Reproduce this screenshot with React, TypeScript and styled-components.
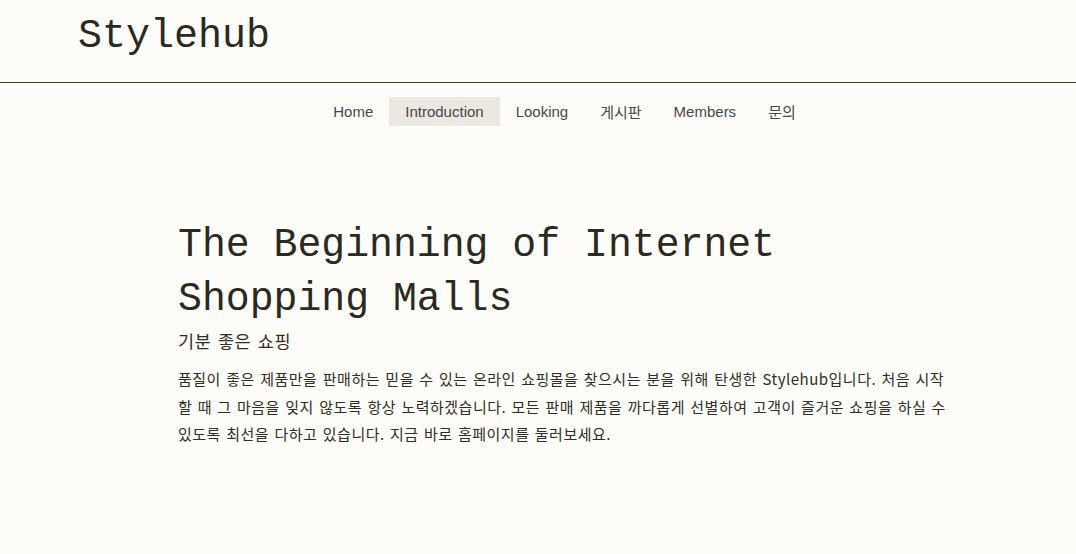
import React from "react";
import styled, { createGlobalStyle } from "styled-components";

const Global = createGlobalStyle`
  html, body { margin: 0; padding: 0; background: #fdfcf8; }
  body { font-family: "Liberation Sans", "Noto Sans CJK KR", sans-serif; color: #2e2e26; }
`;

const Header = styled.header`
  height: 82px;
  border-bottom: 1px solid #3f4231;
  display: flex;
  align-items: center;
  padding-left: 78px;
  box-sizing: content-box;
`;

const Logo = styled.div`
  font-family: "Liberation Mono", "Courier New", monospace;
  font-size: 40px;
  color: #2a2a22;
  margin-top: -10px;
`;

const Nav = styled.nav`
  display: flex;
  justify-content: center;
  margin-top: 14px;
  padding-left: 53px;
`;

const NavItem = styled.a<{ $active?: boolean }>`
  display: flex;
  align-items: center;
  height: 29px;
  padding: 0 16px;
  font-size: 15px;
  color: #4a4548;
  background: ${(p) => (p.$active ? "#ece8e1" : "transparent")};
  font-family: "Liberation Sans", "Noto Sans CJK KR", sans-serif;
`;

const Main = styled.main`
  padding: 93px 0 0 178px;
  width: 780px;
`;

const Title = styled.h1`
  margin: 0;
  font-family: "Liberation Mono", "Courier New", monospace;
  font-weight: normal;
  font-size: 39.8px;
  line-height: 54px;
  color: #2a2a22;
`;

const Sub = styled.h2`
  margin: 1px 0 0;
  font-weight: normal;
  font-size: 17.5px;
  line-height: 26px;
  letter-spacing: 0.6px;
  word-spacing: 2px;
  font-family: "Noto Sans CJK KR", sans-serif;
  color: #2e2e26;
`;

const Para = styled.p`
  margin: 11px 0 0;
  font-size: 15px;
  line-height: 27.5px;
  letter-spacing: 0.5px;
  word-spacing: 1.5px;
  font-family: "Noto Sans CJK KR", sans-serif;
  color: #2e2e26;
`;

export default function App() {
  const items = ["Home", "Introduction", "Looking", "게시판", "Members", "문의"];
  return (
    <>
      <Global />
      <Header>
        <Logo>Stylehub</Logo>
      </Header>
      <Nav>
        {items.map((it) => (
          <NavItem key={it} $active={it === "Introduction"}>
            {it}
          </NavItem>
        ))}
      </Nav>
      <Main>
        <Title>
          The Beginning of Internet
          <br />
          Shopping Malls
        </Title>
        <Sub>기분 좋은 쇼핑</Sub>
        <Para>
          품질이 좋은 제품만을 판매하는 믿을 수 있는 온라인 쇼핑몰을 찾으시는 분을 위해 탄생한 Stylehub입니다. 처음 시작
          할 때 그 마음을 잊지 않도록 항상 노력하겠습니다. 모든 판매 제품을 까다롭게 선별하여 고객이 즐거운 쇼핑을 하실 수
          있도록 최선을 다하고 있습니다. 지금 바로 홈페이지를 둘러보세요.
        </Para>
      </Main>
    </>
  );
}
